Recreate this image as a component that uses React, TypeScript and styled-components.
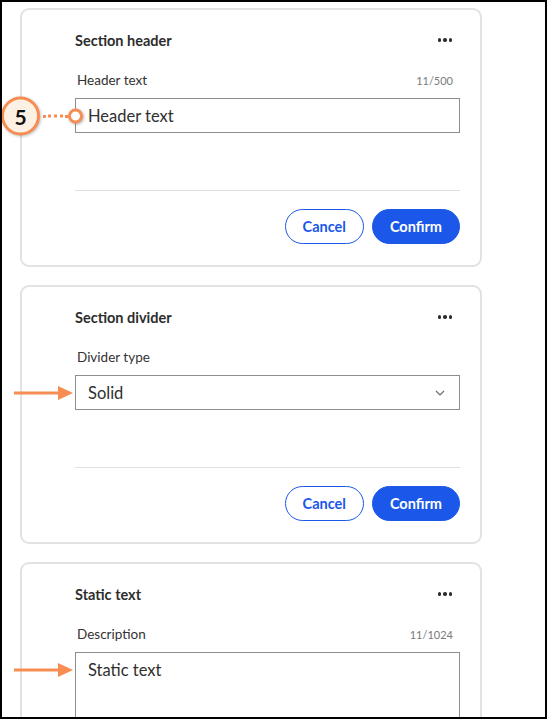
import styled, { createGlobalStyle } from 'styled-components'

const GlobalStyle = createGlobalStyle`
  html, body {
    margin: 0;
    padding: 0;
    background: #ffffff;
  }
  * {
    box-sizing: border-box;
  }
`

const ORANGE = '#f78d52'
const BLUE = '#1b58e9'

const Frame = styled.div`
  width: 547px;
  height: 719px;
  border: 2px solid #000;
  overflow: hidden;
  padding: 6px 0 0 18px;
  display: flex;
  flex-direction: column;
  gap: 18px;
  font-family: Lato, 'Noto Sans', sans-serif;
  color: #2f2f2f;
`

const Card = styled.section`
  flex-shrink: 0;
  width: 462px;
  border: 2px solid #e2e2e2;
  border-radius: 9px;
  padding: 22px 20px 21px 53px;
  display: flex;
  flex-direction: column;
`

const HeaderRow = styled.div`
  height: 16px;
  display: flex;
  align-items: center;
  justify-content: space-between;
  padding-right: 8px;
`

const Title = styled.h2`
  margin: 0;
  font-size: 14.5px;
  font-weight: 700;
  color: #2d2d2d;
`

const Dots = styled.div`
  display: flex;
  gap: 2px;
  span {
    width: 3.5px;
    height: 3.5px;
    border-radius: 50%;
    background: #2d2d2d;
  }
`

const LabelRow = styled.div`
  margin-top: 24px;
  height: 16px;
  display: flex;
  align-items: center;
  justify-content: space-between;
  padding: 0 7px 0 2px;
`

const Label = styled.span`
  font-size: 13.5px;
  color: #333;
`

const Counter = styled.span`
  font-size: 11px;
  color: #7a7a7a;
`

const Field = styled.div<{ $tall?: boolean }>`
  position: relative;
  margin-top: 10px;
  height: ${(p) => (p.$tall ? '110px' : '35px')};
  border: 1px solid #8e8e8e;
  display: flex;
  align-items: ${(p) => (p.$tall ? 'flex-start' : 'center')};
  justify-content: space-between;
  padding: ${(p) => (p.$tall ? '7px 14px 0 12px' : '0 14px 0 12px')};
  font-size: 16.5px;
  color: #2f2f2f;
`

const Divider = styled.hr`
  margin: 57px 0 0;
  border: none;
  border-top: 1px solid #e0e0e0;
`

const Actions = styled.div`
  margin-top: 18px;
  display: flex;
  justify-content: flex-end;
  gap: 8px;
`

const Button = styled.button<{ $primary?: boolean }>`
  height: 35px;
  padding: 0 17px;
  border-radius: 18px;
  border: 1px solid ${BLUE};
  background: ${(p) => (p.$primary ? BLUE : '#fff')};
  color: ${(p) => (p.$primary ? '#fff' : BLUE)};
  font-family: Lato, 'Noto Sans', sans-serif;
  font-size: 14.5px;
  font-weight: 700;
  cursor: pointer;
`

const Callout = styled.div`
  position: absolute;
  left: -75px;
  top: 50%;
  transform: translateY(-50%);
  display: flex;
  align-items: center;
`

const Badge = styled.div`
  width: 39px;
  height: 39px;
  border-radius: 50%;
  border: 3px solid ${ORANGE};
  background: #fdf1e4;
  box-shadow: 1px 1px 3px rgba(0, 0, 0, 0.25);
  display: flex;
  align-items: center;
  justify-content: center;
  font-size: 21px;
  font-weight: 700;
  color: #111;
`

const DottedLine = styled.div`
  width: 25px;
  margin-left: 3px;
  border-top: 3px dotted ${ORANGE};
`

const Pin = styled.div`
  width: 15px;
  height: 15px;
  border-radius: 50%;
  border: 3px solid ${ORANGE};
  background: #fff;
  box-shadow: 1px 1px 3px rgba(0, 0, 0, 0.3);
`

const Arrow = styled.svg<{ $top: number }>`
  position: absolute;
  left: -62px;
  top: ${(p) => p.$top}px;
`

const PointerArrow = ({ top }: { top: number }) => (
  <Arrow $top={top} width="60" height="16" viewBox="0 0 60 16">
    <rect x="0" y="6.5" width="46" height="3" fill={ORANGE} />
    <polygon points="44,1 59,8 44,15" fill={ORANGE} />
  </Arrow>
)

const MoreDots = () => (
  <Dots>
    <span />
    <span />
    <span />
  </Dots>
)

const Chevron = () => (
  <svg width="10" height="6" viewBox="0 0 10 6">
    <path d="M1 1l4 4 4-4" fill="none" stroke="#6a6a6a" strokeWidth="1.2" />
  </svg>
)

const Footer = () => (
  <>
    <Divider />
    <Actions>
      <Button>Cancel</Button>
      <Button $primary>Confirm</Button>
    </Actions>
  </>
)

export default function App() {
  return (
    <>
      <GlobalStyle />
      <Frame>
        <Card>
          <HeaderRow>
            <Title>Section header</Title>
            <MoreDots />
          </HeaderRow>
          <LabelRow>
            <Label>Header text</Label>
            <Counter>11/500</Counter>
          </LabelRow>
          <Field>
            <Callout>
              <Badge>5</Badge>
              <DottedLine />
              <Pin />
            </Callout>
            <span>Header text</span>
          </Field>
          <Footer />
        </Card>

        <Card>
          <HeaderRow>
            <Title>Section divider</Title>
            <MoreDots />
          </HeaderRow>
          <LabelRow>
            <Label>Divider type</Label>
          </LabelRow>
          <Field>
            <PointerArrow top={9} />
            <span>Solid</span>
            <Chevron />
          </Field>
          <Footer />
        </Card>

        <Card>
          <HeaderRow>
            <Title>Static text</Title>
            <MoreDots />
          </HeaderRow>
          <LabelRow>
            <Label>Description</Label>
            <Counter>11/1024</Counter>
          </LabelRow>
          <Field $tall>
            <PointerArrow top={9} />
            <span>Static text</span>
          </Field>
        </Card>
      </Frame>
    </>
  )
}
